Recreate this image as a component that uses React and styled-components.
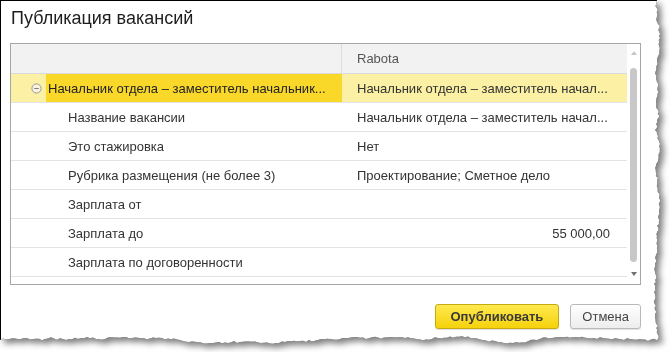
import React from "react";
import styled, { createGlobalStyle } from "styled-components";

const GlobalStyle = createGlobalStyle`
  html, body { margin: 0; padding: 0; background: #ffffff; }
  body { font-family: "Liberation Sans", Arial, sans-serif; }
  * { box-sizing: border-box; }
`;

function makeTorn() {
  let s = 12345;
  const rnd = () => {
    s = (s * 16807) % 2147483647;
    return (s - 1) / 2147483646;
  };
  const W = 657;
  const H = 340;
  const pts = ["0px 0px", `${W}px 0px`];
  let drift = 0;
  for (let y = 2; y < H; y += 2) {
    drift = Math.max(-2.5, Math.min(2.5, drift + (rnd() - 0.5) * 2));
    pts.push(`${(W + drift + (rnd() - 0.5) * 1.6).toFixed(1)}px ${y}px`);
  }
  drift = 0;
  for (let x = W; x > 0; x -= 3) {
    drift = Math.max(-3, Math.min(3, drift + (rnd() - 0.5) * 2));
    pts.push(`${x}px ${(H + drift + (rnd() - 0.5) * 1.6).toFixed(1)}px`);
  }
  pts.push(`0px ${H}px`);
  return `polygon(${pts.join(",")})`;
}

const TORN = makeTorn();

const ShadowWrap = styled.div`
  width: 670px;
  height: 352px;
  filter: drop-shadow(0 0 0.5px rgba(0, 0, 0, 0.9))
    drop-shadow(4px 4px 3px rgba(0, 0, 0, 0.5));
`;

const Panel = styled.div`
  width: 664px;
  height: 346px;
  background: #ffffff;
  border-left: 1px solid #000;
  border-top: 1px solid #000;
  clip-path: ${TORN};
  padding: 6px 0 0 9px;
  display: flex;
  flex-direction: column;
  color: #333;
`;

const Title = styled.h1`
  margin: 0;
  font-size: 18px;
  line-height: 22px;
  font-weight: normal;
  color: #1e1e1e;
  padding-left: 1px;
`;

const Table = styled.div`
  margin-top: 14px;
  width: 631px;
  height: 242px;
  border: 1px solid #a6a6a6;
  display: flex;
`;

const Body = styled.div`
  flex: 1;
  display: flex;
  flex-direction: column;
  overflow: hidden;
`;

const HeaderRow = styled.div`
  flex: none;
  height: 30px;
  display: grid;
  grid-template-columns: 331px 1fr;
  background: #f2f2f2;
  border-bottom: 1px solid #d9d9d9;
`;

const HeaderCell = styled.div`
  display: flex;
  align-items: center;
  padding-left: 15px;
  font-size: 13px;
  color: #555;
  border-right: ${(p) => (p.$divider ? "1px solid #dcdcdc" : "none")};
`;

const Row = styled.div`
  flex: none;
  height: 29px;
  display: grid;
  grid-template-columns: 331px 1fr;
  border-bottom: 1px solid #e3e3e3;
`;

const NameCell = styled.div`
  display: flex;
  align-items: center;
  padding-left: 57px;
  font-size: 13px;
  color: #333;
  white-space: nowrap;
  overflow: hidden;
`;

const ValueCell = styled.div`
  display: flex;
  align-items: center;
  justify-content: ${(p) => (p.$right ? "flex-end" : "flex-start")};
  padding: 0 17px 0 15px;
  font-size: 13px;
  color: #333;
  white-space: nowrap;
  overflow: hidden;
  background: ${(p) => p.$bg || "transparent"};
`;

const GroupCell = styled.div`
  display: flex;
  align-items: stretch;
  font-size: 13px;
  color: #222;
  white-space: nowrap;
  overflow: hidden;
`;

const ToggleArea = styled.div`
  flex: none;
  width: 35px;
  background: #fbf0a4;
  display: flex;
  align-items: center;
  padding-left: 20px;
`;

const GroupLabel = styled.div`
  flex: 1;
  background: #f9d829;
  display: flex;
  align-items: center;
  padding-left: 2px;
`;

const ScrollBar = styled.div`
  flex: none;
  width: 13px;
  display: flex;
  flex-direction: column;
  align-items: center;
  padding: 7px 0 8px;
  background: #ffffff;
`;

const Arrow = styled.div`
  width: 0;
  height: 0;
  border-left: 3.5px solid transparent;
  border-right: 3.5px solid transparent;
  ${(p) =>
    p.$down
      ? `border-top: 4px solid #707070; margin-top: auto;`
      : `border-bottom: 4px solid #c6c6c6;`}
`;

const Thumb = styled.div`
  margin-top: 13px;
  width: 7px;
  height: 194px;
  border-radius: 4px;
  background: #c8c8c8;
`;

const Footer = styled.div`
  width: 631px;
  margin-top: 19px;
  display: flex;
  justify-content: flex-end;
  gap: 11px;
`;

const Button = styled.button`
  height: 25px;
  padding: 0 ${(p) => (p.$primary ? "15px" : "11px")};
  font-family: "Liberation Sans", Arial, sans-serif;
  font-size: 13px;
  font-weight: ${(p) => (p.$primary ? "bold" : "normal")};
  color: ${(p) => (p.$primary ? "#3a3a3a" : "#444")};
  border-radius: 3px;
  border: 1px solid ${(p) => (p.$primary ? "#c7a912" : "#b9b9b9")};
  background: ${(p) =>
    p.$primary
      ? "linear-gradient(#fee94d, #f6d20c)"
      : "linear-gradient(#ffffff, #ededed)"};
  box-shadow: 0 1px 1px rgba(0, 0, 0, 0.12);
  cursor: pointer;
`;

const CollapseIcon = () => (
  <svg width="11" height="11" viewBox="0 0 11 11">
    <circle cx="5.5" cy="5.5" r="4.6" fill="#f7f3df" stroke="#9a9a9a" strokeWidth="1" />
    <line x1="3.2" y1="5.5" x2="7.8" y2="5.5" stroke="#808080" strokeWidth="1" />
  </svg>
);

const rows = [
  ["Название вакансии", "Начальник отдела – заместитель начал..."],
  ["Это стажировка", "Нет"],
  ["Рубрика размещения (не более 3)", "Проектирование; Сметное дело"],
  ["Зарплата от", ""],
  ["Зарплата до", "55 000,00", true],
  ["Зарплата по договоренности", ""],
  ["", ""],
];

export default function App() {
  return (
    <>
      <GlobalStyle />
      <ShadowWrap>
        <Panel>
          <Title>Публикация вакансий</Title>
          <Table>
            <Body>
              <HeaderRow>
                <HeaderCell $divider />
                <HeaderCell>Rabota</HeaderCell>
              </HeaderRow>
              <Row>
                <GroupCell>
                  <ToggleArea>
                    <CollapseIcon />
                  </ToggleArea>
                  <GroupLabel>Начальник отдела – заместитель начальник...</GroupLabel>
                </GroupCell>
                <ValueCell $bg="#fbf0a4">Начальник отдела – заместитель начал...</ValueCell>
              </Row>
              {rows.map(([name, value, right], i) => (
                <Row key={i}>
                  <NameCell>{name}</NameCell>
                  <ValueCell $right={right}>{value}</ValueCell>
                </Row>
              ))}
            </Body>
            <ScrollBar>
              <Arrow />
              <Thumb />
              <Arrow $down />
            </ScrollBar>
          </Table>
          <Footer>
            <Button $primary>Опубликовать</Button>
            <Button>Отмена</Button>
          </Footer>
        </Panel>
      </ShadowWrap>
    </>
  );
}
